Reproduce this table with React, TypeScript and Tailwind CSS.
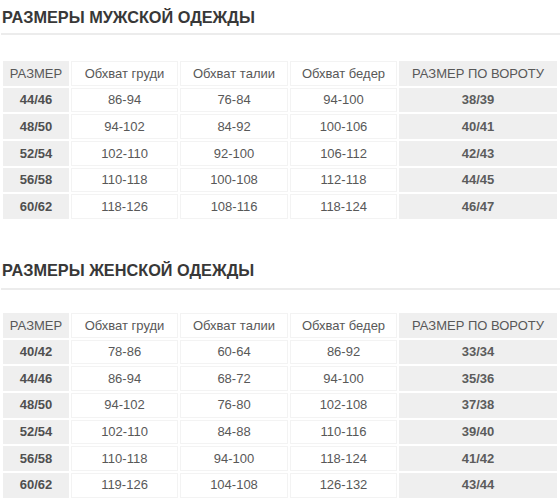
import type React from "react"

type Row = [string, string, string, string, string]

const header: Row = ["РАЗМЕР", "Обхват груди", "Обхват талии", "Обхват бедер", "РАЗМЕР ПО ВОРОТУ"]

const menRows: Row[] = [
  ["44/46", "86-94", "76-84", "94-100", "38/39"],
  ["48/50", "94-102", "84-92", "100-106", "40/41"],
  ["52/54", "102-110", "92-100", "106-112", "42/43"],
  ["56/58", "110-118", "100-108", "112-118", "44/45"],
  ["60/62", "118-126", "108-116", "118-124", "46/47"],
]

const womenRows: Row[] = [
  ["40/42", "78-86", "60-64", "86-92", "33/34"],
  ["44/46", "86-94", "68-72", "94-100", "35/36"],
  ["48/50", "94-102", "76-80", "102-108", "37/38"],
  ["52/54", "102-110", "84-88", "110-116", "39/40"],
  ["56/58", "110-118", "94-100", "118-124", "41/42"],
  ["60/62", "119-126", "104-108", "126-132", "43/44"],
]

const grayCell = "bg-[#efefef]"
const whiteCell = "bg-white border border-[#f3f3f3]"

const SizeTable: React.FC<{ rows: Row[]; className?: string }> = ({ rows, className }) => (
  <table className={`w-[558px] table-fixed border-separate border-spacing-[2px] text-[13px] text-[#585858] ${className ?? ""}`}>
    <colgroup>
      <col className="w-[66px]" />
      <col className="w-[107px]" />
      <col className="w-[108px]" />
      <col className="w-[107px]" />
      <col className="w-[158px]" />
    </colgroup>
    <thead>
      <tr>
        {header.map((h, i) => (
          <th
            key={i}
            className={`h-[24.67px] p-0 text-center font-normal ${i === 0 || i === 4 ? grayCell : whiteCell}`}
          >
            {h}
          </th>
        ))}
      </tr>
    </thead>
    <tbody>
      {rows.map((row, r) => (
        <tr key={r}>
          {row.map((v, i) => (
            <td
              key={i}
              className={`h-[24.67px] p-0 text-center ${
                i === 0 ? `${grayCell} font-bold text-[#505050]` : i === 4 ? `${grayCell} font-bold text-[#5c5c5c]` : whiteCell
              }`}
            >
              {v}
            </td>
          ))}
        </tr>
      ))}
    </tbody>
  </table>
)

const Title: React.FC<{ children: React.ReactNode; className?: string }> = ({ children, className }) => (
  <h2 className={`pl-[1px] text-[16.3px] leading-[18px] font-bold text-[#383838] border-b-2 border-[#ececec] ${className ?? ""}`}>
    {children}
  </h2>
)

export default function App() {
  return (
    <div className="w-[560px] h-[504px] overflow-hidden bg-white pt-[8px] pl-[1px] font-['Liberation_Sans',Arial,sans-serif]">
      <Title className="pb-[7px]">РАЗМЕРЫ МУЖСКОЙ ОДЕЖДЫ</Title>
      <SizeTable rows={menRows} className="mt-[24px]" />

      <Title className="mt-[40px] pb-[9px]">РАЗМЕРЫ ЖЕНСКОЙ ОДЕЖДЫ</Title>
      <SizeTable rows={womenRows} className="mt-[21px]" />
    </div>
  )
}
